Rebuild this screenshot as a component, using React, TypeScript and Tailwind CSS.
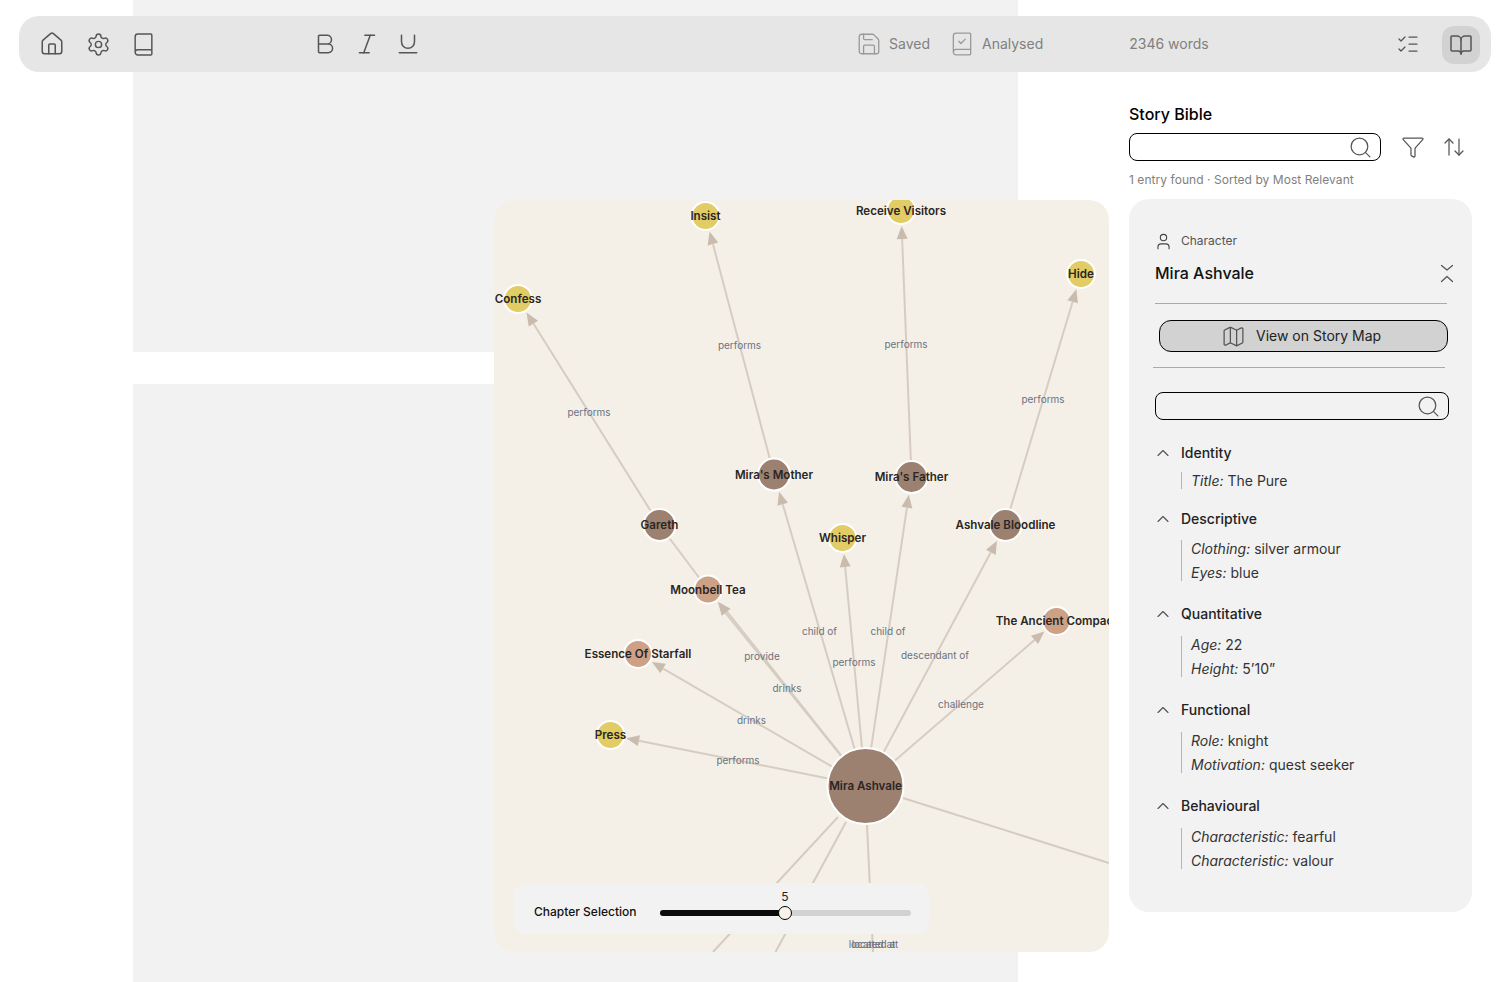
import { House, Settings, Book, Bold, Italic, Underline, Save, BookCheck, ListChecks, BookOpen, Search, Funnel, ArrowUpDown, User, Map, ChevronUp } from 'lucide-react';

const YELLOW = '#e2cc66';
const TAN = '#cda185';
const BROWN = '#9c8171';

const nodes: Record<string, { x: number; y: number; r: number; fill: string; label: string }> = {
  mira: { x: 865.5, y: 786, r: 38, fill: BROWN, label: 'Mira Ashvale' },
  insist: { x: 705.5, y: 216, r: 14, fill: YELLOW, label: 'Insist' },
  confess: { x: 518, y: 299, r: 14, fill: YELLOW, label: 'Confess' },
  receive: { x: 901, y: 210, r: 14, fill: YELLOW, label: 'Receive Visitors' },
  hide: { x: 1081, y: 274, r: 14, fill: YELLOW, label: 'Hide' },
  mother: { x: 774, y: 474.5, r: 16, fill: BROWN, label: "Mira's Mother" },
  father: { x: 911.5, y: 477, r: 16, fill: BROWN, label: "Mira's Father" },
  gareth: { x: 659.5, y: 525, r: 16, fill: BROWN, label: 'Gareth' },
  moonbell: { x: 708, y: 589.5, r: 14, fill: TAN, label: 'Moonbell Tea' },
  whisper: { x: 842.5, y: 538, r: 14, fill: YELLOW, label: 'Whisper' },
  bloodline: { x: 1005.5, y: 525, r: 16, fill: BROWN, label: 'Ashvale Bloodline' },
  compact: { x: 1056.5, y: 621, r: 14, fill: TAN, label: 'The Ancient Compact' },
  essence: { x: 638, y: 654, r: 14, fill: TAN, label: 'Essence Of Starfall' },
  press: { x: 610.5, y: 735, r: 14, fill: YELLOW, label: 'Press' },
};

const edges: [string, string][] = [
  ['gareth', 'confess'],
  ['mother', 'insist'],
  ['father', 'receive'],
  ['bloodline', 'hide'],
  ['moonbell', 'gareth'],
  ['mira', 'mother'],
  ['mira', 'father'],
  ['mira', 'whisper'],
  ['mira', 'bloodline'],
  ['mira', 'compact'],
  ['mira', 'moonbell'],
  ['mira', 'moonbell'],
  ['mira', 'essence'],
  ['mira', 'press'],
];

// edges that run off the card
const looseEdges = [
  [838, 817, 713, 952],
  [846, 822, 775.5, 952],
  [867, 825, 873, 952],
  [903, 798, 1109, 863],
];

const edgeLabels = [
  { x: 589, y: 412, t: 'performs' },
  { x: 739.5, y: 345, t: 'performs' },
  { x: 906, y: 344, t: 'performs' },
  { x: 1043, y: 399, t: 'performs' },
  { x: 762, y: 656, t: 'provide' },
  { x: 787, y: 688, t: 'drinks' },
  { x: 751.5, y: 720, t: 'drinks' },
  { x: 738, y: 760, t: 'performs' },
  { x: 819.5, y: 631, t: 'child of' },
  { x: 888, y: 631, t: 'child of' },
  { x: 854, y: 662, t: 'performs' },
  { x: 935, y: 655, t: 'descendant of' },
  { x: 961, y: 704, t: 'challenge' },
  { x: 872, y: 944, t: 'located at' },
  { x: 875, y: 944, t: 'located at' },
];

const sections = [
  { title: 'Identity', headClass: 'mt-[23px]', boxClass: 'mt-[9px]', rows: [['Title:', 'The Pure']] },
  { title: 'Descriptive', headClass: 'mt-[20px]', boxClass: 'mt-[11px]', rows: [['Clothing:', 'silver armour'], ['Eyes:', 'blue']] },
  { title: 'Quantitative', headClass: 'mt-[23px]', boxClass: 'mt-[12px]', rows: [['Age:', '22'], ['Height:', '5’10”']] },
  { title: 'Functional', headClass: 'mt-[23px]', boxClass: 'mt-[12px]', rows: [['Role:', 'knight'], ['Motivation:', 'quest seeker']] },
  { title: 'Behavioural', headClass: 'mt-[23px]', boxClass: 'mt-[12px]', rows: [['Characteristic:', 'fearful'], ['Characteristic:', 'valour']] },
];

const Graph = () => (
  <svg className="absolute left-0 top-0" width="615" height="752" viewBox="494 200 615 752">
    {looseEdges.map((l, i) => (
      <line key={i} x1={l[0]} y1={l[1]} x2={l[2]} y2={l[3]} stroke="#d6cbbf" strokeWidth="2" />
    ))}
    {edges.map(([a, b], i) => {
      const s = nodes[a];
      const e = nodes[b];
      const len = Math.hypot(e.x - s.x, e.y - s.y);
      const ux = (e.x - s.x) / len;
      const uy = (e.y - s.y) / len;
      const tipD = e.r + 2;
      const tx = e.x - ux * tipD;
      const ty = e.y - uy * tipD;
      const bx = tx - ux * 13;
      const by = ty - uy * 13;
      const isMoonbellLink = a === 'moonbell';
      // the two Mira to Moonbell edges sit a hair apart
      const off = a === 'mira' && b === 'moonbell' ? (i === 10 ? 0.7 : -0.7) : 0;
      return (
        <g key={i}>
          <line x1={s.x} y1={s.y} x2={(isMoonbellLink ? e.x : bx) + off} y2={(isMoonbellLink ? e.y : by) - off} stroke="#d6cbbf" strokeWidth="2" opacity="0.95" />
          {!isMoonbellLink && (
            <polygon points={`${tx},${ty} ${bx - uy * 5.5},${by + ux * 5.5} ${bx + uy * 5.5},${by - ux * 5.5}`} fill="#c9bcae" />
          )}
        </g>
      );
    })}
    {edgeLabels.map((l, i) => (
      <text key={i} x={l.x} y={l.y} dy="3.5" textAnchor="middle" fontSize="10" fontWeight="400" fill="#6b7280">{l.t}</text>
    ))}
    {Object.values(nodes).map((n) => (
      <circle key={n.label} cx={n.x} cy={n.y} r={n.r} fill={n.fill} stroke="#ffffff" strokeWidth="2" />
    ))}
    {Object.values(nodes).map((n) => (
      <text key={n.label} x={n.x} y={n.y + (n.label === 'Receive Visitors' ? 1 : 0)} dy="4.2" textAnchor="middle" fontSize="11.6" fontWeight="600" fill="#2b2623">{n.label}</text>
    ))}
  </svg>
);

const SearchBox = ({ className }: { className: string }) => (
  <div className={`flex h-[28px] items-center justify-end rounded-lg border border-black pr-[7px] ${className}`}>
    <Search className="h-[25px] w-[25px] text-[#555555]" strokeWidth={1.2} />
  </div>
);

export default function App() {
  return (
    <div className="relative flex h-[982px] w-[1512px] overflow-hidden bg-white font-[Inter,sans-serif]">
      {/* Pages */}
      <div className="ml-[133px] flex w-[885px] flex-col gap-8">
        <div className="h-[352px] bg-[#f2f2f2]" />
        <div className="flex-1 bg-[#f2f2f2]" />
      </div>

      {/* Story Bible */}
      <div className="ml-[111px] w-[343px] pt-[104px]">
        <h2 className="text-base leading-[20px] font-medium text-black">Story Bible</h2>
        <div className="mt-[9px] flex items-center">
          <SearchBox className="w-[252px]" />
          <Funnel className="ml-[20px] h-[24px] w-[24px] text-[#555555]" strokeWidth={1.25} />
          <ArrowUpDown className="ml-[17px] h-[24px] w-[24px] text-[#555555]" strokeWidth={1.25} />
        </div>
        <p className="mt-[11px] text-xs leading-[16px] tracking-[0.05px] text-[#808080]">1 entry found · Sorted by Most Relevant</p>

        <div className="mt-[11px] h-[713px] rounded-[20px] bg-[#f2f2f2] pt-[34px] pl-[26px]">
          <div className="flex h-[16px] items-center">
            <User className="-ml-[1.5px] h-[19px] w-[19px] text-[#444444]" strokeWidth={1.4} />
            <span className="ml-[8.5px] text-xs text-[#555555]">Character</span>
          </div>
          <div className="mt-[12px] flex h-[24px] items-center justify-between pr-[18px]">
            <span className="text-base font-medium text-[#111111]">Mira Ashvale</span>
            <svg width="14" height="20" viewBox="0 0 14 20" fill="none" stroke="#555555" strokeWidth="1.25" strokeLinecap="round" strokeLinejoin="round">
              <path d="M1.5 2.5 L7 7 L12.5 2.5" />
              <path d="M1.5 18.5 L7 13.5 L12.5 18.5" />
            </svg>
          </div>
          <div className="mt-[18px] h-px w-[292px] bg-[#aaaaaa]" />
          <button className="mt-[16px] ml-[4px] flex h-[32px] w-[289px] items-center gap-[10.5px] rounded-xl border border-black bg-[#d2d2d2] pl-[60.5px] text-sm text-[#222222]">
            <Map className="h-[25px] w-[25px] text-[#555555]" strokeWidth={1.2} />
            View on Story Map
          </button>
          <div className="mt-[15px] -ml-[2px] h-px w-[292px] bg-[#aaaaaa]" />
          <SearchBox className="mt-[24px] w-[294px]" />

          {sections.map((s) => (
            <div key={s.title}>
              <div className={`flex h-[20px] items-center ${s.headClass}`}>
                <ChevronUp className="-ml-[2px] h-[20px] w-[20px] text-[#555555]" strokeWidth={1.4} />
                <span className="ml-[8px] text-sm font-medium text-[#222222]">{s.title}</span>
              </div>
              <div className={`ml-[26px] flex flex-col gap-[7px] border-l border-[#b5b5b5] pl-[9px] ${s.boxClass}`}>
                {s.rows.map((r, i) => (
                  <p key={i} className="text-sm leading-[17px] text-[#333333]">
                    <em>{r[0]}</em> {r[1]}
                  </p>
                ))}
              </div>
            </div>
          ))}
        </div>
      </div>

      {/* Top toolbar */}
      <div className="absolute left-[19px] top-[16px] flex h-[56px] w-[1472px] items-center rounded-[20px] bg-[#e6e6e6] text-[#555555]">
        <div className="ml-[20px] flex items-center gap-[20.5px]">
          <House className="h-[26px] w-[26px]" strokeWidth={1.4} />
          <Settings className="h-[25px] w-[25px]" strokeWidth={1.4} />
          <Book className="h-[25px] w-[25px]" strokeWidth={1.4} />
        </div>
        <div className="ml-[156px] flex items-center gap-[15.5px]">
          <Bold className="h-[26px] w-[26px]" strokeWidth={1.4} />
          <Italic className="h-[26px] w-[26px]" strokeWidth={1.4} />
          <Underline className="h-[26px] w-[26px]" strokeWidth={1.4} />
        </div>
        <div className="ml-[435px] flex items-center text-sm text-[#808080]">
          <Save className="h-[26px] w-[26px] text-[#999999]" strokeWidth={1.2} />
          <span className="ml-[7px]">Saved</span>
          <BookCheck className="ml-[19px] h-[26px] w-[26px] text-[#999999]" strokeWidth={1.2} />
          <span className="ml-[7px]">Analysed</span>
        </div>
        <span className="ml-[86px] text-sm text-[#808080]">2346 words</span>
        <ListChecks className="ml-[187.5px] h-[24px] w-[24px]" strokeWidth={1.25} />
        <div className="mt-[2px] ml-[22px] flex h-[38px] w-[38px] items-center justify-center rounded-xl bg-[#d2d2d2]">
          <BookOpen className="h-[24px] w-[24px]" strokeWidth={1.5} />
        </div>
      </div>

      {/* Story map */}
      <div className="absolute left-[494px] top-[200px] h-[752px] w-[615px] overflow-hidden rounded-[20px] bg-[#f4f0e8]">
        <Graph />
        <div className="absolute left-[20px] top-[683px] flex h-[51px] w-[415px] items-center rounded-xl bg-[#f2f2f2] pt-[7px] pl-[20px]">
          <span className="w-[126px] text-xs font-medium text-[#111111]">Chapter Selection</span>
          <div className="relative mt-[1px] h-[6px] w-[251px] rounded-full bg-[#d2d2d2]">
            <div className="h-full w-[125px] rounded-full bg-[#0a0a0a]" />
            <span className="absolute left-[125px] top-[-21px] -translate-x-1/2 text-xs text-[#222222]">5</span>
            <div className="absolute left-[118px] top-[-4px] h-[14px] w-[14px] rounded-full border border-black bg-[#f7f3e8]" />
          </div>
        </div>
      </div>
    </div>
  );
}
